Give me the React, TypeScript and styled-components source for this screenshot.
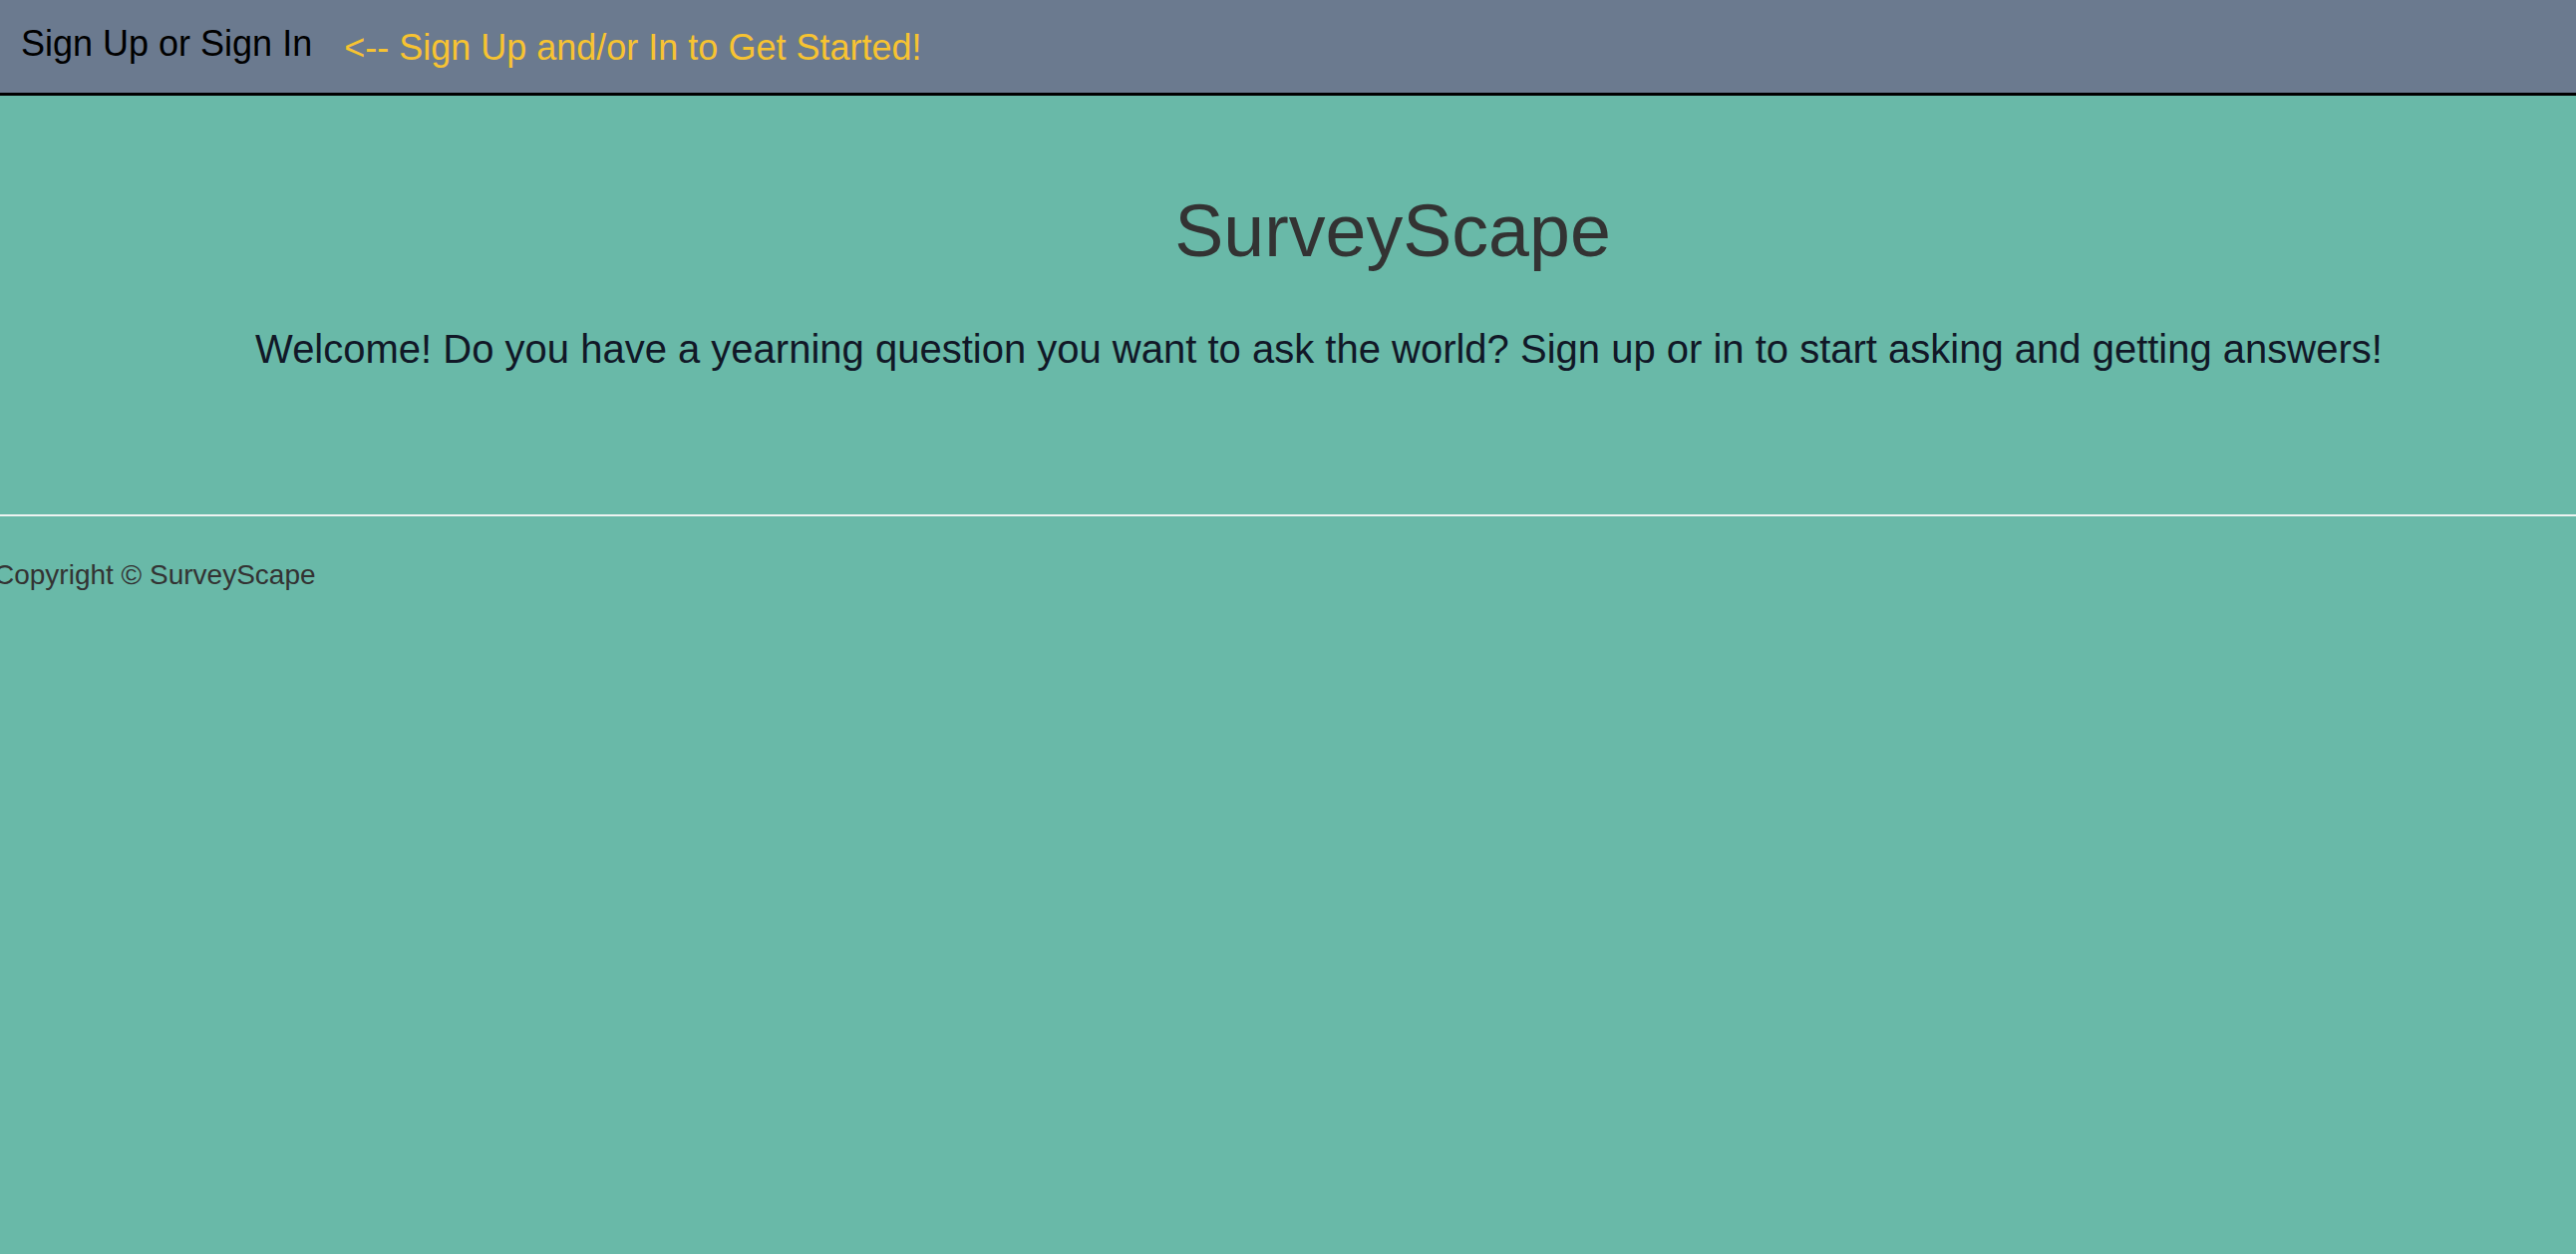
import React from "react";
import styled, { createGlobalStyle } from "styled-components";

const GlobalStyle = createGlobalStyle`
  html, body {
    margin: 0;
    padding: 0;
    background: #69b9a8;
  }
  body {
    font-family: "Liberation Sans", Arial, Helvetica, sans-serif;
    min-height: 100vh;
  }
`;

const Page = styled.div`
  min-height: 100vh;
  background: #69b9a8;
  overflow: hidden;
`;

const NavBar = styled.nav`
  display: flex;
  align-items: flex-start;
  gap: 32px;
  height: 93px;
  padding: 0 21px;
  background: #6b7a8f;
  border-bottom: 3px solid #000;
`;

const NavLink = styled.a<{ $accent?: boolean }>`
  display: block;
  font-size: 36px;
  line-height: 36px;
  margin-top: ${(p) => (p.$accent ? "30px" : "26px")};
  color: ${(p) => (p.$accent ? "#f7c331" : "#000")};
  text-decoration: none;
  white-space: nowrap;
  cursor: pointer;
`;

const Hero = styled.main`
  display: flex;
  flex-direction: column;
  text-align: center;
`;

const Title = styled.h1`
  margin: 99px 0 0;
  padding-left: 210px;
  font-size: 73.6px;
  line-height: 74px;
  font-weight: 400;
  color: #333333;
`;

const Welcome = styled.p`
  margin: 61px 0 0;
  padding-left: 62px;
  font-size: 40px;
  line-height: 40px;
  color: #111827;
`;

const Divider = styled.hr`
  margin: 146px 0 0;
  border: none;
  height: 2px;
  background: #eef3f1;
`;

const Footer = styled.footer`
  margin: 45px 0 0 -6px;
  font-size: 28px;
  line-height: 28px;
  color: #333333;
`;

export default function App() {
  return (
    <Page>
      <GlobalStyle />
      <NavBar>
        <NavLink>Sign Up or Sign In</NavLink>
        <NavLink $accent>&lt;-- Sign Up and/or In to Get Started!</NavLink>
      </NavBar>
      <Hero>
        <Title>SurveyScape</Title>
        <Welcome>
          Welcome! Do you have a yearning question you want to ask the world? Sign up or in to start asking and getting answers!
        </Welcome>
      </Hero>
      <Divider />
      <Footer>Copyright © SurveyScape</Footer>
    </Page>
  );
}
